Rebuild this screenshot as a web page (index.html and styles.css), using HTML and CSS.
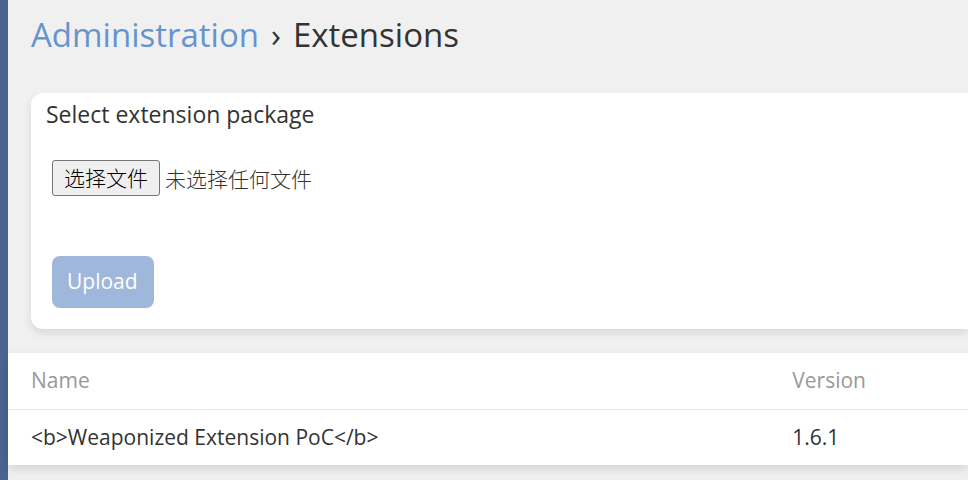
FILE: index.html
```html
<!DOCTYPE html>
<html lang="en">
<head>
<meta charset="utf-8">
<title>Administration › Extensions</title>
<link rel="stylesheet" href="styles.css">
</head>
<body>
<div class="shell">
  <aside class="rail"></aside>
  <main class="content">
    <h1 class="breadcrumb"><a href="#">Administration</a><span class="chevron">›</span><span>Extensions</span></h1>
    <form class="panel">
      <h2 class="panel-title">Select extension package</h2>
      <div class="panel-body">
        <label class="file-field" lang="zh-CN">
          <input class="file-input" type="file">
          <span class="file-button">选择文件</span>
          <span class="file-status">未选择任何文件</span>
        </label>
        <button class="upload" type="button">Upload</button>
      </div>
    </form>
    <table class="list">
      <thead><tr><th class="name">Name</th><th>Version</th></tr></thead>
      <tbody><tr><td>&lt;b&gt;Weaponized Extension PoC&lt;/b&gt;</td><td>1.6.1</td></tr></tbody>
    </table>
  </main>
</div>
</body>
</html>
```

FILE: styles.css
```css
* { box-sizing: border-box; }

body {
  margin: 0;
  background: #f0f0f0;
  color: #333;
  font: 21px/32px "Open Sans", "Noto Sans CJK SC", sans-serif;
}

.shell {
  display: flex;
  min-height: 100vh;
}

.rail {
  flex: 0 0 8px;
  background: #4a6491;
}

.content {
  flex: 1;
  min-width: 0;
}

.breadcrumb {
  display: flex;
  gap: 12px;
  margin: 0 0 34px 23px;
  padding-top: 11px;
  font-size: 33px;
  font-weight: 400;
  line-height: 48px;
}

.breadcrumb a {
  color: #6794ce;
  text-decoration: none;
}

.panel {
  margin: 0 0 24px 23px;
  padding: 5px 15px 21px;
  border-radius: 12px 0 0 12px;
  background: #fff;
  box-shadow: 0 4px 9px rgba(0, 0, 0, 0.1);
}

.panel-title {
  margin: 0;
  font-size: 23px;
  font-weight: 400;
  line-height: 32px;
}

.panel-body {
  display: flex;
  flex-direction: column;
  align-items: flex-start;
  gap: 60px;
  padding: 30px 6px 0;
}

.file-field {
  position: relative;
  display: flex;
  align-items: center;
  gap: 5px;
  font-family: "Noto Sans CJK SC", sans-serif;
  font-weight: 300;
}

.file-input {
  position: absolute;
  inset: 0;
  width: 100%;
  opacity: 0;
}

.file-button {
  padding: 0 11px 2px;
  border: 1px solid #767676;
  border-radius: 3px;
  background: #efefef;
  color: #000;
}

.upload {
  height: 52px;
  padding: 0 16px 2px 15px;
  border: 0;
  border-radius: 8px;
  background: #9eb7db;
  color: #fff;
  font: inherit;
}

.list {
  width: 100%;
  border-spacing: 0;
  background: #fff;
  box-shadow: 0 4px 9px rgba(0, 0, 0, 0.12);
}

.list th,
.list td {
  padding: 11px 0 13px 23px;
  font-weight: 400;
  text-align: left;
}

.list td {
  padding-bottom: 12px;
}

.list th {
  border-bottom: 1px solid #e7e7e7;
  color: #999;
}

.list .name {
  width: 79.3%;
}
```
